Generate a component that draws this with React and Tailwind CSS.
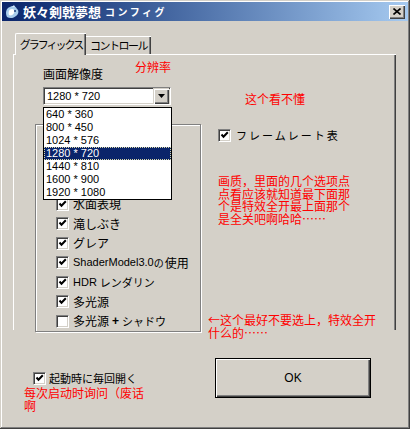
import React from "react";

const jp = "font-['Noto_Sans_CJK_JP',sans-serif]";
const latin = "font-['Liberation_Sans','Noto_Sans_CJK_JP',sans-serif]";
const red = "font-['Noto_Sans_CJK_SC',sans-serif] text-[#ff0000] text-[12px]";

function Check({ checked }) {
  return (
    <span className="block w-[13px] h-[13px] shrink-0 bg-white border border-t-[#808080] border-l-[#808080] border-b-white border-r-white shadow-[inset_1px_1px_0_#404040,inset_-1px_-1px_0_#d4d0c8]">
      {checked && (
        <svg viewBox="0 0 11 11" className="block w-[11px] h-[11px]">
          <path d="M2.5 4.5 L4.5 6.7 L8.8 2.3" fill="none" stroke="#000" strokeWidth="2" />
        </svg>
      )}
    </span>
  );
}

const resolutions = [
  "640 * 360",
  "800 * 450",
  "1024 * 576",
  "1280 * 720",
  "1440 * 810",
  "1600 * 900",
  "1920 * 1080",
];

const options = [
  { label: null, checked: true },
  { label: null, checked: true },
  { label: null, checked: true },
  { label: <span>水面表現</span>, checked: true },
  { label: <span>滝しぶき</span>, checked: true },
  { label: <span>グレア</span>, checked: true },
  {
    label: (
      <>
        <span className={`${latin} text-[11px]`}>ShaderModel3.0</span>
        <span className="text-[10px]">の</span>
        <span className="ml-[1px]">使用</span>
      </>
    ),
    checked: true,
  },
  {
    label: (
      <>
        <span className={`${latin} text-[11px] mr-[3px]`}>HDR</span>
        <span className="text-[11px]">レンダリン</span>
      </>
    ),
    checked: true,
  },
  { label: <span>多光源</span>, checked: true },
  {
    label: (
      <>
        <span>多光源</span>
        <span className={`${latin} text-[12px] font-bold mx-[3px]`}>+</span>
        <span className="text-[11px]">シャドウ</span>
      </>
    ),
    checked: false,
  },
];

export default function App() {
  return (
    <div className={`relative w-[410px] h-[429px] overflow-hidden bg-[#d4d0c8] p-[2px] flex flex-col ${jp} text-black shadow-[inset_-1px_-1px_0_#404040,inset_1px_1px_0_#d4d0c8,inset_-2px_-2px_0_#808080,inset_2px_2px_0_#fff]`}>
      {/* title bar */}
      <div className="h-[19px] flex items-center bg-linear-to-r from-[#0a246a] to-[#a6caf0] shrink-0">
        <svg viewBox="0 0 16 16" className="w-[16px] h-[16px] ml-[2px]">
          <path d="M3 13 C1 9 2 4 6 3 C8 1 12 2 13 5 C15 6 15 10 12 12 C10 14 6 15 3 13 Z" fill="#a9cdec" />
          <path d="M5 11 C4 8 5 5 8 5 C10 5 11 7 10 9 C9 11 7 12 5 11 Z" fill="#ffffff" />
          <path d="M8 3 L10 1 L11 3 Z" fill="#d8ecff" />
          <circle cx="11" cy="7" r="1" fill="#1b3c7a" />
        </svg>
        <span className="ml-[3px] text-white font-bold text-[13px] leading-none">妖々剣戟夢想</span>
        <span className="ml-[4px] text-white font-bold text-[10px] leading-none tracking-[2.5px]">コンフィグ</span>
        <span className="ml-auto mr-[3px] w-[16px] h-[14px] bg-[#d4d0c8] flex items-center justify-center shadow-[inset_1px_1px_0_#fff,inset_-1px_-1px_0_#404040,inset_-2px_-2px_0_#808080]">
          <svg viewBox="0 0 8 7" className="w-[8px] h-[7px]">
            <path d="M0.5 0.5 L7.5 6.5 M7.5 0.5 L0.5 6.5" stroke="#000" strokeWidth="1.6" />
          </svg>
        </span>
      </div>

      {/* tabs */}
      <div className="relative z-10 mt-[12px] ml-[13px] flex items-end h-[22px] whitespace-nowrap">
        <div className="w-[71px] h-[22px] bg-[#d4d0c8] border-t border-l border-white rounded-tl-[2px] shadow-[inset_-1px_0_0_#404040,inset_-2px_0_0_#808080] flex items-center justify-center text-[11px] tracking-[-2px] leading-none pb-[1px]">
          グラフィックス
        </div>
        <div className="w-[65px] h-[18px] mb-[1px] border-t border-white shadow-[inset_-1px_0_0_#404040,inset_-2px_0_0_#808080] flex items-center justify-center text-[11px] tracking-[-1.5px] leading-none">
          コントロール
        </div>
      </div>

      {/* tab panel */}
      <div className="relative -mt-[1px] ml-[11px] w-[383px] h-[276px] shrink-0 border-t border-l border-white shadow-[inset_-1px_0_0_#404040,inset_-2px_0_0_#808080] flex">
        <div className="ml-[21px] pt-[11px] flex flex-col">
          <div className="ml-[8px] text-[12px] leading-[16px]">画面解像度</div>
          <div className="relative ml-[8px] mt-[5px] w-[128px] h-[20px] bg-white flex items-center border border-t-[#808080] border-l-[#808080] border-b-white border-r-white shadow-[inset_1px_1px_0_#404040,inset_-1px_-1px_0_#d4d0c8]">
            <span className={`${latin} text-[11px] leading-none pl-[3px]`}>1280 * 720</span>
            <span className="ml-auto mr-[1px] w-[16px] h-[16px] bg-[#d4d0c8] flex items-center justify-center shadow-[inset_1px_1px_0_#d4d0c8,inset_2px_2px_0_#fff,inset_-1px_-1px_0_#404040,inset_-2px_-2px_0_#808080]">
              <svg viewBox="0 0 7 4" className="w-[7px] h-[4px]">
                <path d="M0 0 L7 0 L3.5 4 Z" fill="#000" />
              </svg>
            </span>
            {/* open list */}
            <div className="absolute z-20 left-[-1px] top-[19px] w-[129px] bg-white border border-black">
              {resolutions.map((r) => (
                <div
                  key={r}
                  className={`${latin} h-[13px] text-[11px] leading-[13px] pl-[2px] ${
                    r === "1280 * 720"
                      ? "bg-[#0a246a] text-white outline-1 outline-dotted outline-[#d8d8a8] -outline-offset-1"
                      : "text-black"
                  }`}
                >
                  {r}
                </div>
              ))}
            </div>
          </div>

          <div className="mt-[19px] w-[166px] h-[210px] border border-[#808080] shadow-[1px_1px_0_#fff,inset_1px_1px_0_#fff] pt-[11px] pl-[20px]">
            {options.map((o, i) => (
              <div key={i} className="h-[19.5px] flex items-center gap-[4px] text-[12px] leading-none">
                <Check checked={o.checked} />
                {o.label && <span className="flex items-center whitespace-nowrap">{o.label}</span>}
              </div>
            ))}
          </div>
        </div>

        <div className="ml-[17px] mt-[74px]">
          <div className="flex items-center gap-[5px]">
            <Check checked />
            <span className="text-[11px] leading-none tracking-[2px] whitespace-nowrap">フレームレート表</span>
          </div>
        </div>
      </div>

      {/* bottom row */}
      <div className="mt-[28px] flex items-center">
        <div className="ml-[31px] w-[182px] flex items-center gap-[3px]">
          <Check checked />
          <span className="text-[11px] leading-none whitespace-nowrap">起動時に毎回開く</span>
        </div>
        <button className={`${latin} w-[156px] h-[40px] bg-[#d4d0c8] border border-black text-[12px] shadow-[inset_1px_1px_0_#fff,inset_-1px_-1px_0_#404040,inset_-2px_-2px_0_#808080]`}>
          OK
        </button>
      </div>

      {/* red annotations */}
      <div className={`absolute z-30 left-[135px] top-[60px] leading-[14px] ${red}`}>分辨率</div>
      <div className={`absolute z-30 left-[245px] top-[92px] leading-[14px] ${red}`}>这个看不懂</div>
      <div className={`absolute z-30 left-[218px] top-[175px] leading-[12.5px] ${red}`}>
        <div>画质，里面的几个选项点</div>
        <div>点看应该就知道最下面那</div>
        <div>个是特效全开最上面那个</div>
        <div>是全关吧啊哈哈……</div>
      </div>
      <div className={`absolute z-30 left-[208px] top-[314px] leading-[12.5px] ${red}`}>
        <div>←这个最好不要选上，特效全开</div>
        <div>什么的……</div>
      </div>
      <div className={`absolute z-30 left-[24px] top-[387px] leading-[12.6px] ${red}`}>
        <div>每次启动时询问（废话</div>
        <div>啊</div>
      </div>
    </div>
  );
}
